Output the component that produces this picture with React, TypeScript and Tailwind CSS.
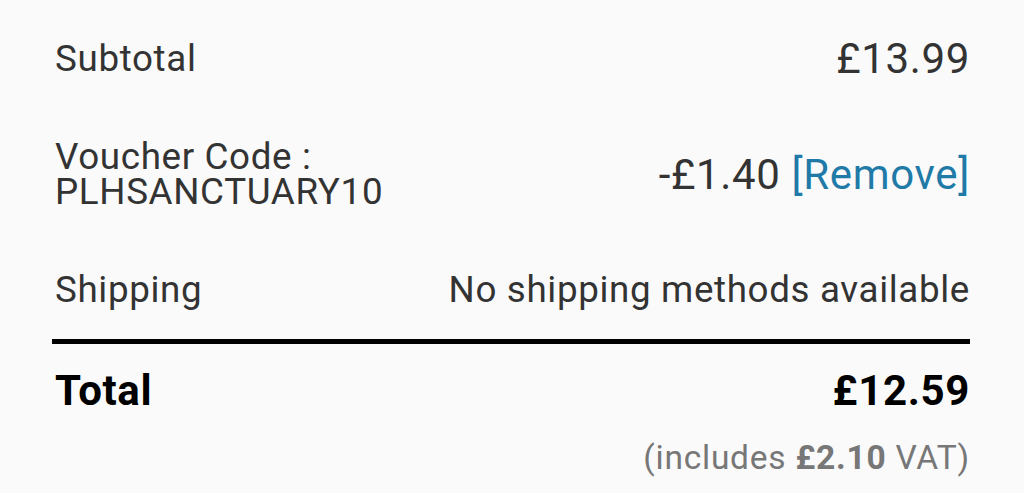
import React from "react";

type Line = { label: React.ReactNode; value: React.ReactNode; amount?: boolean };

export default function App() {
  const rows: Line[] = [
    { label: "Subtotal", value: "£13.99", amount: true },
    {
      label: (
        <>
          Voucher Code :
          <br />
          PLHSANCTUARY10
        </>
      ),
      value: (
        <>
          -£1.40 <span className="text-[#1f7aa8]">[Remove]</span>
        </>
      ),
      amount: true,
    },
    { label: "Shipping", value: "No shipping methods available" },
  ];

  return (
    <div
      className="min-h-screen bg-[#fafafa] text-[#333333] tracking-[0.65px]"
      style={{ fontFamily: "Roboto, 'Noto Sans', sans-serif" }}
    >
      <div className="pl-[52px] pr-[54px] pt-[41px]">
        {/* summary lines */}
        <div className="flex flex-col gap-[63px] pl-[3px]">
          {rows.map((r, i) => (
            <div key={i} className="flex items-center justify-between text-[36.75px] leading-[35px]">
              <div>{r.label}</div>
              <div className={r.amount ? "text-right text-[42px] leading-[35px]" : "text-right"}>{r.value}</div>
            </div>
          ))}
        </div>

        <div className="mt-[32px] h-[5px] bg-black" />

        {/* total */}
        <div className="mt-[26px] flex items-center justify-between pl-[3px] text-[42px] leading-[42px] font-bold text-black">
          <div>Total</div>
          <div>£12.59</div>
        </div>
        <div className="mt-[28px] text-right text-[33.5px] leading-[36px] tracking-[0.75px] text-[#777777]">
          (includes <span className="font-bold">£2.10</span> VAT)
        </div>
      </div>
    </div>
  );
}
